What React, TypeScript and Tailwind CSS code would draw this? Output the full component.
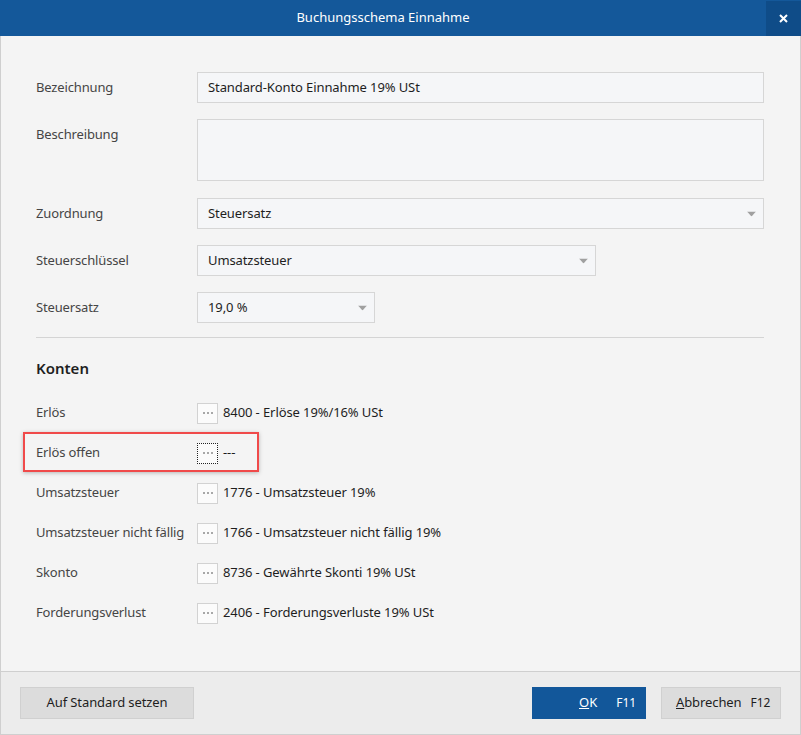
import React from "react";

const font = { fontFamily: '"Segoe UI", "Noto Sans", "Open Sans", sans-serif' };

function Arrow() {
  return (
    <svg width="9" height="5" viewBox="0 0 9 5" className="absolute right-[7px] top-1/2 -translate-y-1/2">
      <path d="M0 0 L9 0 L4.5 5 Z" fill="#a0a0a0" />
    </svg>
  );
}

function Select({ value, w }: { value: string; w: string }) {
  return (
    <div className={`relative h-[31px] ${w} border border-[#d6d6d6] bg-[#f5f6f8] flex items-center pl-[10px] text-[13px] tracking-[-0.1px] text-[#1e1e1e]`}>
      {value}
      <Arrow />
    </div>
  );
}

function Dots({ focus }: { focus?: boolean }) {
  return (
    <div
      className={`w-[21px] h-[21px] flex items-center justify-center bg-[#fbfbfb] ${
        focus ? "border border-dotted border-[#222]" : "border border-[#d2d2d2]"
      }`}
    >
      <svg width="10" height="2" viewBox="0 0 10 2">
        <rect x="0" y="0" width="2" height="2" fill="#a8a8a8" />
        <rect x="4" y="0" width="2" height="2" fill="#a8a8a8" />
        <rect x="8" y="0" width="2" height="2" fill="#a8a8a8" />
      </svg>
    </div>
  );
}

function KontoRow({ label, value, focus, highlight }: { label: string; value: string; focus?: boolean; highlight?: boolean }) {
  return (
    <div className="relative h-[40px] flex items-center">
      {highlight && (
        <div className="absolute left-[-13px] top-[-1px] w-[236px] h-[40px] border-2 border-[#f04a4a] shadow-[0_1px_4px_rgba(0,0,0,0.25)]" />
      )}
      <div className="w-[161px] text-[13px] tracking-[-0.15px] text-[#454545]">{label}</div>
      <Dots focus={focus} />
      <div className="ml-[5px] text-[13px] tracking-[-0.1px] text-[#1e1e1e]">{value}</div>
    </div>
  );
}

export default function App() {
  return (
    <div style={font} className="w-[801px] h-[735px] flex flex-col bg-[#f4f4f4]">
      <div className="h-[36px] bg-[#14589a] flex items-stretch shrink-0">
        <div className="flex-1 flex items-center justify-center text-white text-[13px]">Buchungsschema Einnahme</div>
        <div className="w-[35px] mt-[1px] bg-[#0f4c88] flex items-center justify-center">
          <svg width="9" height="9" viewBox="0 0 9 9">
            <path d="M1 1 L8 8 M8 1 L1 8" stroke="#fff" strokeWidth="2" />
          </svg>
        </div>
      </div>
      <div className="flex-1 border-x border-[#cfcfcf] pl-[35px] pr-[36px] pt-[36px]">
        <div className="flex items-center">
          <div className="w-[161px] text-[13px] tracking-[-0.15px] text-[#454545]">Bezeichnung</div>
          <div className="flex-1 h-[31px] border border-[#d6d6d6] bg-[#f5f6f8] flex items-center pl-[10px] text-[13px] tracking-[-0.1px] text-[#1e1e1e]">
            Standard-Konto Einnahme 19% USt
          </div>
        </div>
        <div className="flex items-start mt-[16px]">
          <div className="w-[161px] h-[31px] flex items-center text-[13px] tracking-[-0.15px] text-[#454545]">Beschreibung</div>
          <div className="flex-1 h-[62px] border border-[#d6d6d6] bg-[#f5f6f8]" />
        </div>
        <div className="flex items-center mt-[17px]">
          <div className="w-[161px] text-[13px] tracking-[-0.15px] text-[#454545]">Zuordnung</div>
          <Select value="Steuersatz" w="flex-1" />
        </div>
        <div className="flex items-center mt-[16px]">
          <div className="w-[161px] text-[13px] tracking-[-0.15px] text-[#454545]">Steuerschlüssel</div>
          <Select value="Umsatzsteuer" w="w-[399px]" />
        </div>
        <div className="flex items-center mt-[16px]">
          <div className="w-[161px] text-[13px] tracking-[-0.15px] text-[#454545]">Steuersatz</div>
          <Select value="19,0 %" w="w-[178px]" />
        </div>
        <div className="mt-[14px] h-px bg-[#d4d4d4]" />
        <div className="mt-[20px] h-[20px] flex items-center text-[15px] font-semibold text-[#1e1e1e]">Konten</div>
        <div className="mt-[15px]">
          <KontoRow label="Erlös" value="8400 - Erlöse 19%/16% USt" />
          <KontoRow label="Erlös offen" value="---" focus highlight />
          <KontoRow label="Umsatzsteuer" value="1776 - Umsatzsteuer 19%" />
          <KontoRow label="Umsatzsteuer nicht fällig" value="1766 - Umsatzsteuer nicht fällig 19%" />
          <KontoRow label="Skonto" value="8736 - Gewährte Skonti 19% USt" />
          <KontoRow label="Forderungsverlust" value="2406 - Forderungsverluste 19% USt" />
        </div>
      </div>
      <div className="h-[64px] shrink-0 border border-[#cfcfcf] bg-[#ececec] flex items-center pl-[19px] pr-[19px]">
        <div className="w-[174px] h-[32px] border border-[#d0d0d0] bg-[#dcdcdc] flex items-center justify-center text-[13px] tracking-[-0.1px] text-[#1e1e1e]">
          Auf Standard setzen
        </div>
        <div className="flex-1" />
        <div className="w-[114px] h-[32px] bg-[#12579a] flex items-center text-white text-[13px]">
          <span className="ml-[47px]"><span className="underline">O</span>K</span>
          <span className="ml-[19px] text-[12px]">F11</span>
        </div>
        <div className="ml-[15px] w-[120px] h-[32px] border border-[#d0d0d0] bg-[#dcdcdc] flex items-center text-[13px] tracking-[-0.1px] text-[#1e1e1e]">
          <span className="ml-[14px]"><span className="underline">A</span>bbrechen</span>
          <span className="ml-[9px] text-[12px]">F12</span>
        </div>
      </div>
    </div>
  );
}
